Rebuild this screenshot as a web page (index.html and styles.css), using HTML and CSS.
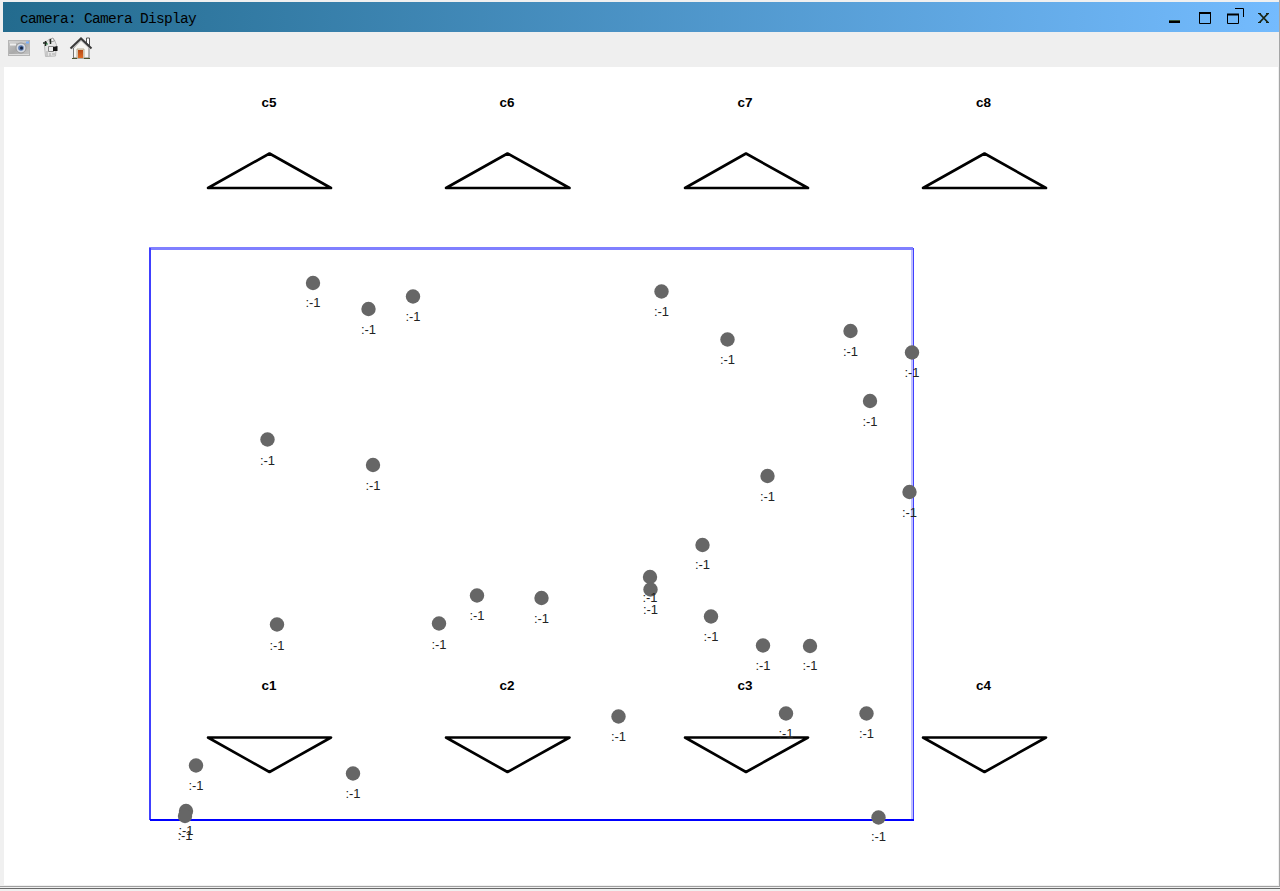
FILE: index.html
```html
<!DOCTYPE html>
<html lang="en">
<head>
<meta charset="utf-8">
<title>camera: Camera Display</title>
<link rel="stylesheet" href="styles.css">
</head>
<body>
<div class="window">
  <header class="titlebar">
    <h1 class="title">camera: Camera Display</h1>
    <svg class="controls" width="110" height="30" viewBox="1168 2 110 30">
      <path d="M1169 20.500h11" stroke="#36553f"/>
      <path d="M1169 22h11" stroke="#000" stroke-width="2"/>
      <path d="M1199.500 13v10.500h11V13M1227.500 14v9.500h11V14M1235 8.500h8.500V17" fill="none" stroke="#000"/>
      <path d="M1199 13h12M1227 14.500h12" stroke="#000" stroke-width="2"/>
      <path d="M1259.500 13.500l8.500 9M1268 13.500l-8.500 9" stroke="#182414" stroke-width="1.800"/>
      <path d="M1258 13.500h3M1266 13.500h3M1258 22.500h3M1266 22.500h3" stroke="#182414"/>
    </svg>
  </header>
  <nav class="toolbar">
    <svg width="90" height="28" viewBox="5 35 90 28">
      <defs>
        <linearGradient id="body" x2="1" y2="1"><stop stop-color="#c9c9c9"/><stop offset=".5" stop-color="#aaa"/><stop offset="1" stop-color="#c8c8c8"/></linearGradient>
        <linearGradient id="door" x2="0" y2="1"><stop stop-color="#b64912"/><stop offset="1" stop-color="#df6c25"/></linearGradient>
      </defs>
      <rect x="8.500" y="40.500" width="21" height="15" fill="url(#body)" stroke="#b5b5b5"/>
      <path d="M9 42h19M9 54.500h20" stroke="#ddd"/>
      <path d="M10 44.500h6" stroke="#eee" stroke-width="2"/>
      <circle cx="21" cy="48" r="5" fill="#d7dce4" stroke="#999"/>
      <circle cx="21" cy="48" r="2.800" fill="#5c7bb0"/>
      <circle cx="21.500" cy="48" r="1.500" fill="#14233e"/>
      <path d="M26 42.500h3" stroke="#7ab1ff" stroke-width="2"/>
      <path d="M44.500 46l1-4 3-2h6l2 5-1 11-10 .5z" fill="#e6e6e6" stroke="#bbb"/>
      <path d="M49 39.500l4-1.500 1.500 3-4.500 1z" fill="#f6f6f6" stroke="#999"/>
      <path d="M43 43h4M45.500 41v5M50.500 39v5" stroke="#202820" stroke-width="1.500"/>
      <path d="M47 43v2" stroke="#21823d"/>
      <path d="M48.500 46.500h5v5h-5z" fill="#eee" stroke="#888"/>
      <path d="M53 47l4.500-1v5H53z" fill="#151515"/>
      <path d="M47 51v5M50 53v3M52 54h3" stroke="#aaa"/>
      <path d="M86.500 38h3v8l-3-3z" fill="#fff" stroke="#555"/>
      <path d="M73.500 48l7.500-8 8 8v10H73.500z" fill="#f7f6f2" stroke="#777"/>
      <path d="M77 49h7v9h-7z" fill="#eee3cd" stroke="#b7aa93"/>
      <path d="M78 50h5v8h-5z" fill="url(#door)"/>
      <path d="M70.500 48.500L81 38.500 91.500 48.500" fill="none" stroke="#3b3b3b" stroke-width="2"/>
      <path d="M72 49l9-8.500 9 8.500" fill="none" stroke="#bbb"/>
      <path d="M72 58.500h5M84 58.500h6" stroke="#4d552c"/>
    </svg>
  </nav>
  <main class="view">
    <svg class="scene" width="1274" height="818" viewBox="4 67 1274 818">
      <g class="area">
        <path class="edge-top" d="M149 248.500h764"/>
        <path class="edge-left" d="M150 248v572"/>
        <path class="edge-right-soft" d="M912 250v569"/>
        <path class="edge-right" d="M913.500 248v573"/>
        <path class="edge-bottom" d="M150 820h764"/>
      </g>
      <g class="cameras">
        <path d="M208 188L269.500 153.500 331 188zM446 188L507.500 153.500 569.500 188zM685 188L746 153.500 808 188zM923 188L984.500 153.500 1046 188z"/>
        <path d="M208 737.500L269.500 772 331 737.500zM446 737.500L507.500 772 569.500 737.500zM685 737.500L746 772 808 737.500zM923 737.500L984.500 772 1046 737.500z"/>
      </g>
      <g class="camera-names">
        <text x="269" y="107">c5</text><text x="507" y="107">c6</text><text x="745" y="107">c7</text><text x="983.500" y="107">c8</text>
        <text x="269" y="690">c1</text><text x="507" y="690">c2</text><text x="745" y="690">c3</text><text x="983.500" y="690">c4</text>
      </g>
      <g class="targets">
        <g transform="translate(313 283)"><circle r="7.200"/><text y="24">:-1</text></g>
        <g transform="translate(368.500 309)"><circle r="7.200"/><text y="25">:-1</text></g>
        <g transform="translate(413 296.500)"><circle r="7.200"/><text y="24.500">:-1</text></g>
        <g transform="translate(661.500 291.500)"><circle r="7.200"/><text y="24.500">:-1</text></g>
        <g transform="translate(727.500 339.500)"><circle r="7.200"/><text y="24.500">:-1</text></g>
        <g transform="translate(850.500 331)"><circle r="7.200"/><text y="25">:-1</text></g>
        <g transform="translate(912 352.500)"><circle r="7.200"/><text y="24.500">:-1</text></g>
        <g transform="translate(870 401)"><circle r="7.200"/><text y="25">:-1</text></g>
        <g transform="translate(267.500 439.500)"><circle r="7.200"/><text y="25.500">:-1</text></g>
        <g transform="translate(373 465)"><circle r="7.200"/><text y="25">:-1</text></g>
        <g transform="translate(767.500 476)"><circle r="7.200"/><text y="25">:-1</text></g>
        <g transform="translate(909.500 492)"><circle r="7.200"/><text y="25">:-1</text></g>
        <g transform="translate(702.500 545)"><circle r="7.200"/><text y="24">:-1</text></g>
        <g transform="translate(650 577)"><circle r="7.200"/></g>
        <g transform="translate(650.500 589.500)"><circle r="7.200"/><text y="24.500">:-1</text></g>
        <g transform="translate(650 577)"><text y="25">:-1</text></g>
        <g transform="translate(477 595.500)"><circle r="7.200"/><text y="24.500">:-1</text></g>
        <g transform="translate(541.500 598)"><circle r="7.200"/><text y="25">:-1</text></g>
        <g transform="translate(439 623.500)"><circle r="7.200"/><text y="25.500">:-1</text></g>
        <g transform="translate(277 624.500)"><circle r="7.200"/><text y="25.500">:-1</text></g>
        <g transform="translate(711 616.500)"><circle r="7.200"/><text y="24.500">:-1</text></g>
        <g transform="translate(763 645.500)"><circle r="7.200"/><text y="24.500">:-1</text></g>
        <g transform="translate(810 646)"><circle r="7.200"/><text y="24">:-1</text></g>
        <g transform="translate(618.500 716.500)"><circle r="7.200"/><text y="24.500">:-1</text></g>
        <g transform="translate(786 713.500)"><circle r="7.200"/><text y="24.500">:-1</text></g>
        <g transform="translate(866.500 713.500)"><circle r="7.200"/><text y="24.500">:-1</text></g>
        <g transform="translate(196 765.500)"><circle r="7.200"/><text y="24.500">:-1</text></g>
        <g transform="translate(353 773.500)"><circle r="7.200"/><text y="24.500">:-1</text></g>
        <g transform="translate(186 811)"><circle r="7.200"/><text y="24">:-1</text></g>
        <g transform="translate(185 816)"><circle r="7.200"/><text y="24">:-1</text></g>
        <g transform="translate(878.500 817.500)"><circle r="7.200"/><text y="23.500">:-1</text></g>
      </g>
    </svg>
  </main>
  <footer class="frame-bottom"></footer>
</div>
</body>
</html>
```
FILE: styles.css
```css
body {
  margin: 0;
  background: #f0f0f0;
}

.window {
  box-sizing: border-box;
  display: flex;
  flex-direction: column;
  width: 1280px;
  height: 891px;
  padding-top: 2px;
  overflow: hidden;
  background: linear-gradient(#a5a5a5, #a5a5a5) right top / 1px 886px no-repeat;
}

.titlebar {
  display: flex;
  flex: none;
  align-items: center;
  justify-content: space-between;
  height: 30px;
  margin: 0 1px 0 3px;
  padding: 0 1px 0 17px;
  background: linear-gradient(90deg, #236b8e, #74bbfe);
}

.title {
  margin: 0;
  padding-top: 3px;
  color: #000;
  font: 400 14.5px/20px "Liberation Mono", monospace;
  letter-spacing: -0.7px;
}

.controls {
  display: block;
}

.toolbar {
  flex: none;
  height: 32px;
  margin-right: 1px;
  padding: 3px 0 0 5px;
  background: #efefef;
}

.toolbar svg {
  display: block;
}

.view {
  flex: none;
  height: 818px;
  margin: 0 2px 0 4px;
  background: #fff;
}

.scene {
  display: block;
}

.area path {
  fill: none;
  stroke-width: 2;
}

.area .edge-top {
  stroke: #8080ff;
  stroke-width: 3;
}

.area .edge-left {
  stroke: #4040ff;
}

.area .edge-right {
  stroke: #4040ff;
  stroke-width: 1;
}

.area .edge-right-soft {
  stroke: #bfbfff;
}

.area .edge-bottom {
  stroke: #00f;
}

.cameras path {
  fill: none;
  stroke: #000;
  stroke-width: 2.6;
  stroke-linejoin: round;
}

.camera-names text {
  font: 700 13.5px "Liberation Sans", Arial, sans-serif;
  text-anchor: middle;
}

.targets circle {
  fill: #666;
}

.targets text {
  fill: #222;
  font: 400 13px "Liberation Sans", Arial, sans-serif;
  text-anchor: middle;
}

.frame-bottom {
  box-sizing: border-box;
  flex: none;
  height: 4px;
  margin-top: 1px;
  border-top: 1px solid #a0a0a0;
  background: linear-gradient(#696969, #696969) 0 1px / 100% 1px no-repeat #f0f0f0;
}
```
